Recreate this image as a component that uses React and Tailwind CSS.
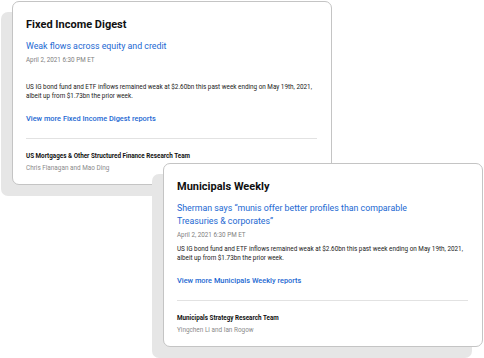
import React from "react";

const cards = [
  {
    title: "Fixed Income Digest",
    headline: ["Weak flows across equity and credit"],
    series: "Fixed Income Digest",
    team: "US Mortgages & Other Structured Finance Research Team",
    authors: "Chris Flanagan and Mao Ding",
    offset: "mt-px ml-[12px]",
  },
  {
    title: "Municipals Weekly",
    headline: [
      "Sherman says \u201cmunis offer better profiles than comparable",
      "Treasuries & corporates\u201d",
    ],
    series: "Municipals Weekly",
    team: "Municipals Strategy Research Team",
    authors: "Yingchen Li and Ian Rogow",
    offset: "-mt-[22px] ml-[163px]",
  },
];

function ReportCard({ card }) {
  return (
    <div
      className={`relative ${card.offset} w-[320px] h-[184px] bg-white border border-[#c4c4c4] rounded-[7px] shadow-[-11px_11px_0_0_#e6e6e6] pl-[13px] pr-[14px] pt-[16px] flex flex-col`}
    >
      <div className="min-h-[65px]">
        <h2 className="text-[11px] leading-[13px] font-bold text-[#111]">
          {card.title}
        </h2>
        <a className="block mt-[9px] text-[8.8px] leading-[13px] text-[#2268d2]">
          {card.headline.map((line) => (
            <span key={line} className="block">
              {line}
            </span>
          ))}
        </a>
        <p className="mt-[2px] text-[6.3px] leading-[10px] text-[#808080]">
          April 2, 2021 6:30 PM ET
        </p>
      </div>
      <p className="text-[6.35px] leading-[9px] text-[#222]">
        US IG bond fund and ETF inflows remained weak at $2.60bn this past week
        ending on May 19th, 2021, albeit up from $1.73bn the prior week.
      </p>
      <a className="mt-[13px] text-[7.4px] leading-[10px] font-medium text-[#2268d2]">
        View more {card.series} reports
      </a>
      <div className="mt-[14px] border-t border-[#e2e2e2]" />
      <p className="mt-[13px] text-[6.3px] leading-[9px] font-bold text-[#111]">
        {card.team}
      </p>
      <p className="mt-[3px] text-[6.4px] leading-[9px] text-[#8a8a8a]">
        {card.authors}
      </p>
    </div>
  );
}

export default function App() {
  return (
    <div className="w-[484px] h-[358px] bg-white overflow-hidden font-['Roboto',sans-serif]">
      {cards.map((card) => (
        <ReportCard key={card.title} card={card} />
      ))}
    </div>
  );
}
